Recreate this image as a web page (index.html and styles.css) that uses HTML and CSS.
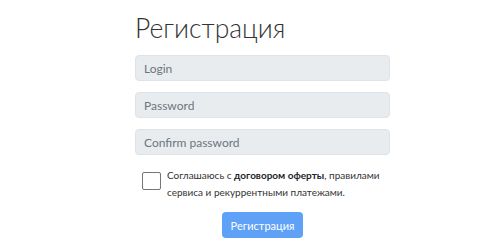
FILE: index.html
```html
<!DOCTYPE html>
<html lang="ru">
<head>
    <meta charset="UTF-8">
    <meta name="viewport" content="width=device-width, initial-scale=1.0">
    <title>Регистрация</title>
    <link rel="stylesheet" href="styles.css">
</head>
<body>
    <div class="container">
        <h1>Регистрация</h1>

        <form class="register-form">
            <input type="text" class="field" placeholder="Login">
            <input type="password" class="field" placeholder="Password">
            <input type="password" class="field" placeholder="Confirm password">

            <label class="agree">
                <input type="checkbox" class="agree-box">
                <span class="agree-text">Соглашаюсь с <b>договором оферты</b>, правилами сервиса и рекуррентными платежами.</span>
            </label>

            <div class="submit">
                <button type="submit" class="button" disabled>Регистрация</button>
            </div>
        </form>
    </div>
</body>
</html>
```

FILE: styles.css
```css
body {
    margin: 0;
    font-family: Lato, "Open Sans", Arial, sans-serif;
    background-color: #fff;
    color: #212529;
}

.container {
    width: 255px;
    margin-left: 135px;
    padding-top: 10px;
}

h1 {
    margin: 0 0 9px 0;
    font-size: 26.5px;
    font-weight: 300;
    line-height: 36px;
    color: #333;
}

.register-form {
    display: flex;
    flex-direction: column;
    gap: 11px;
}

.field {
    box-sizing: border-box;
    height: 26px;
    width: 100%;
    padding: 0 8px;
    font-family: Lato, "Open Sans", Arial, sans-serif;
    font-size: 12px;
    background-color: #e9ecef;
    border: 1px solid #dfe2e6;
    border-radius: 4px;
}

.field::placeholder {
    color: #6c757d;
}

.agree {
    display: flex;
    align-items: flex-start;
    gap: 6px;
    padding-left: 7px;
    margin-top: 1px;
}

.agree-box {
    appearance: none;
    margin: 5px 0 0 0;
    width: 19px;
    height: 18px;
    flex-shrink: 0;
    background-color: #fff;
    border: 1px solid #767676;
    border-radius: 2px;
}

.agree-text {
    font-size: 10px;
    line-height: 17px;
    color: #333;
}

.agree-text b {
    font-weight: 700;
    color: #212529;
}

.submit {
    display: flex;
    justify-content: center;
    margin-top: 0;
}

.button {
    height: 26px;
    padding: 0 9px;
    font-family: Lato, "Open Sans", Arial, sans-serif;
    font-size: 11px;
    color: #fff;
    background-color: #5ea1f6;
    border: none;
    border-radius: 4px;
}
```
